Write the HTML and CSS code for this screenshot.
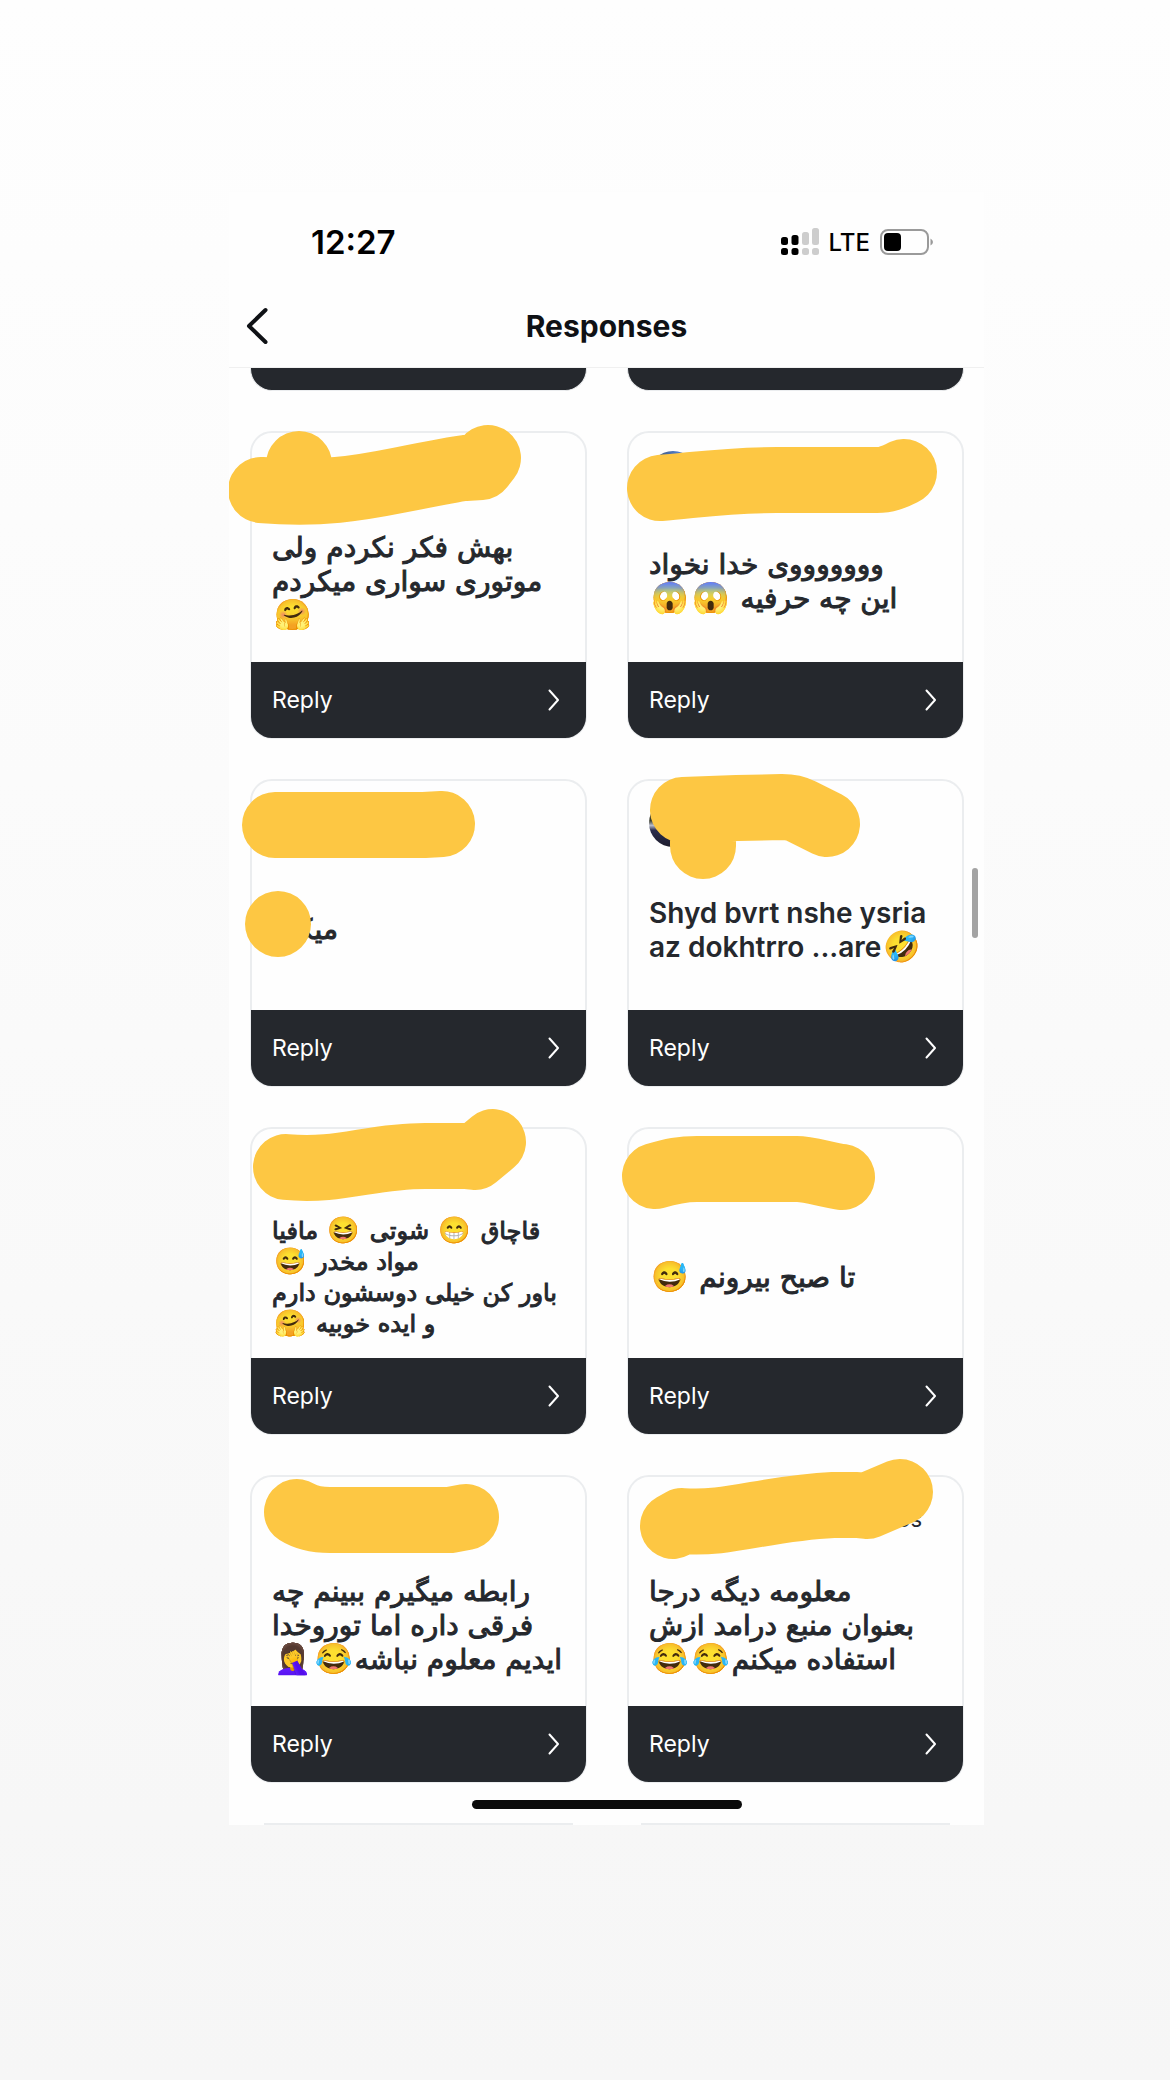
FILE: index.html
```html
<!DOCTYPE html>
<html lang="fa">

<head>
    <meta charset="UTF-8">
    <meta name="viewport" content="width=device-width, initial-scale=1.0">
    <title>Responses</title>
    <link rel="stylesheet" href="styles.css">
</head>

<body>
    <!-- Shared icons -->
    <svg class="icon-defs" aria-hidden="true">
        <symbol id="chevron" viewBox="0 0 12 22">
            <path d="M1.5 1.5 L10 11 L1.5 20.5" fill="none" stroke="currentColor" stroke-width="2" stroke-linecap="round" stroke-linejoin="round" />
        </symbol>
    </svg>

    <main class="phone">
        <div class="status-bar">
            <span class="time">12:27</span>
            <div class="status-icons">
                <svg class="signal" viewBox="0 0 38 28" aria-hidden="true">
                    <rect x="0" y="9" width="7" height="8" rx="2.5" />
                    <rect x="10.5" y="7" width="7" height="10" rx="2.5" />
                    <rect class="off" x="21" y="4" width="7" height="13" rx="2.5" />
                    <rect class="off" x="31" y="0" width="7" height="17" rx="2.5" />
                    <rect x="0" y="20" width="7" height="7" rx="2.5" />
                    <rect x="10.5" y="20" width="7" height="7" rx="2.5" />
                    <rect class="off" x="21" y="20" width="7" height="7" rx="2.5" />
                    <rect class="off" x="31" y="20" width="7" height="7" rx="2.5" />
                </svg>
                <span class="network">LTE</span>
                <svg class="battery" viewBox="0 0 54 26" aria-hidden="true">
                    <rect x="1" y="1" width="47" height="24" rx="7" fill="none" stroke="#9a9a9a" stroke-width="2" />
                    <rect x="4" y="4" width="17" height="18" rx="4" />
                    <path d="M50.5 9.5 Q53 11 53 13 Q53 15 50.5 16.5 Z" fill="#9a9a9a" />
                </svg>
            </div>
        </div>

        <header class="nav-bar">
            <button class="back" type="button" aria-label="Back">
                <svg viewBox="0 0 24 38" aria-hidden="true">
                    <path d="M20.5 3 L4 19 L20.5 35" fill="none" stroke="currentColor" stroke-width="4" stroke-linecap="round" stroke-linejoin="round" />
                </svg>
            </button>
            <h1>Responses</h1>
        </header>

        <section class="responses">
            <div class="card-end"></div>
            <div class="card-end"></div>

            <article class="card">
                <div class="card-head"></div>
                <div class="message">
                    <p dir="rtl">بهش فکر نکردم ولی<br>موتوری سواری میکردم<br><span class="emoji">🤗</span></p>
                </div>
                <button class="reply" type="button">Reply <svg><use href="#chevron" /></svg></button>
                <svg class="marker" aria-hidden="true">
                    <path d="M11 59 C70 64 110 57 150 49 S205 38 215 37 L231 36 L238 27 M49 33 V60" />
                </svg>
            </article>

            <article class="card">
                <div class="card-head"><span class="avatar avatar-blue"></span></div>
                <div class="message">
                    <p dir="rtl">وووووووی خدا نخواد<br>این چه حرفیه <span class="emoji">😱</span><span class="emoji">😱</span></p>
                </div>
                <button class="reply" type="button">Reply <svg><use href="#chevron" /></svg></button>
                <svg class="marker" aria-hidden="true">
                    <path d="M33 57 C70 54 100 49 150 49 H250 C262 49 268 45 277 41" />
                </svg>
            </article>

            <article class="card">
                <div class="card-head"></div>
                <div class="message">
                    <p dir="rtl">میکنم</p>
                </div>
                <button class="reply" type="button">Reply <svg><use href="#chevron" /></svg></button>
                <svg class="marker" aria-hidden="true">
                    <path d="M25 46 H174 L192 45 M28 145 h0.01" />
                </svg>
            </article>

            <article class="card">
                <div class="card-head"><span class="avatar avatar-dark"></span></div>
                <div class="message message-latin">
                    <p>Shyd bvrt nshe ysria<br>az dokhtrro ...are<span class="emoji">🤣</span></p>
                </div>
                <button class="reply" type="button">Reply <svg><use href="#chevron" /></svg></button>
                <svg class="marker" aria-hidden="true">
                    <path d="M56 31 L110 29 L155 28 Q166 28 174 32 L200 45 M76 40 V67" />
                </svg>
            </article>

            <article class="card">
                <div class="card-head"></div>
                <div class="message message-small">
                    <p dir="rtl">قاچاق <span class="emoji">😁</span> شوتی <span class="emoji">😆</span> مافیا<br>مواد مخدر <span class="emoji">😅</span><br>باور کن خیلی دوسشون دارم<br>و ایده خوبیه <span class="emoji">🤗</span></p>
                </div>
                <button class="reply" type="button">Reply <svg><use href="#chevron" /></svg></button>
                <svg class="marker" aria-hidden="true">
                    <path d="M36 40 C90 45 120 29 175 29 H215 L225 30 L243 15" />
                </svg>
            </article>

            <article class="card">
                <div class="card-head"></div>
                <div class="message">
                    <p dir="rtl">تا صبح بیرونم <span class="emoji">😅</span></p>
                </div>
                <button class="reply" type="button">Reply <svg><use href="#chevron" /></svg></button>
                <svg class="marker" aria-hidden="true">
                    <path d="M28 49 C45 44 55 42 70 42 H170 C182 42 200 48 215 50" />
                </svg>
            </article>

            <article class="card">
                <div class="card-head"></div>
                <div class="message">
                    <p dir="rtl">رابطه میگیرم ببینم چه<br>فرقی داره اما توروخدا<br>ایدیم معلوم نباشه<span class="emoji">😂</span><span class="emoji">🤦‍♀️</span></p>
                </div>
                <button class="reply" type="button">Reply <svg><use href="#chevron" /></svg></button>
                <svg class="marker" aria-hidden="true">
                    <path d="M47 37 C55 42 65 45 80 45 H200 L216 42" />
                </svg>
            </article>

            <article class="card">
                <div class="card-head"><span class="username">os</span></div>
                <div class="message">
                    <p dir="rtl">معلومه دیگه درجا<br>بعنوان منبع درامد ازش<br>استفاده میکنم<span class="emoji">😂</span><span class="emoji">😂</span></p>
                </div>
                <button class="reply" type="button">Reply <svg><use href="#chevron" /></svg></button>
                <svg class="marker" aria-hidden="true">
                    <path d="M46 51 L55 46 C100 50 140 33 206 30 H230 L240 31 L273 17" />
                </svg>
            </article>

            <div class="card-start"></div>
            <div class="card-start"></div>
        </section>

        <div class="scrollbar"></div>
        <div class="home-indicator"></div>
    </main>
</body>

</html>
```
FILE: styles.css
```css
/* Reset default margin and padding */
* {
    margin: 0;
    padding: 0;
    box-sizing: border-box;
}

/* Page background, phone column sits a little left of centre */
body {
    font-family: Inter, "DejaVu Sans", sans-serif;
    background: linear-gradient(#fefefe, #f6f6f6);
    min-height: 100vh;
    display: grid;
    grid-template-columns: 229fr 755fr 186fr;
    align-items: start;
    padding: 192px 0;
    color: #25282d;
}

.icon-defs {
    position: absolute;
    width: 0;
    height: 0;
}

.phone {
    grid-column: 2;
    position: relative;
    background: #fefefe;
    overflow: hidden;
}

/* Status bar */
.status-bar {
    display: flex;
    justify-content: space-between;
    align-items: center;
    height: 100px;
    padding: 0 50px 0 82px;
    color: #000;
}

.time {
    font-size: 33px;
    font-weight: 600;
}

.status-icons {
    display: flex;
    align-items: center;
    gap: 10px;
}

.signal {
    width: 38px;
    height: 28px;
}

.signal .off {
    fill: #cdcdcd;
}

.network {
    font-size: 24px;
    font-weight: 500;
}

.battery {
    width: 54px;
    height: 26px;
}

/* Navigation bar */
.nav-bar {
    display: grid;
    grid-template-columns: 60px 1fr 60px;
    align-items: center;
    height: 76px;
    padding-bottom: 8px;
    border-bottom: 1px solid #f0f0f0;
    color: #0f1115;
}

.back {
    display: flex;
    padding-left: 16px;
    border: none;
    background: none;
    color: inherit;
    cursor: pointer;
}

.back svg {
    width: 24px;
    height: 38px;
}

h1 {
    font-size: 30px;
    font-weight: 700;
    text-align: center;
}

/* Cards */
.responses {
    display: grid;
    grid-template-columns: repeat(2, minmax(0, 1fr));
    gap: 40px;
    padding: 0 20px 0 21px;
}

.card {
    position: relative;
    display: flex;
    flex-direction: column;
    height: 308px;
    border: 2px solid #ebedef;
    border-radius: 22px;
}

.card-head {
    display: flex;
    flex: none;
    height: 69px;
    padding: 18px 20px 0;
}

.avatar {
    width: 48px;
    height: 48px;
    border-radius: 50%;
}

.avatar-blue {
    background: linear-gradient(90deg, #3c4a5c, #4f7ccb 60%, #33425c);
}

.avatar-dark {
    background: linear-gradient(#3a3d30 45%, #b9bccb 55%, #2b2d4d 65%, #1d1c2c);
}

.username {
    margin: 10px 20px 0 auto;
    font-size: 22px;
    line-height: 28px;
}

.message {
    flex: 1;
    display: flex;
    align-items: center;
    padding: 0 20px;
    font-family: "DejaVu Sans", sans-serif;
    font-size: 28px;
    line-height: 34px;
    text-align: left;
    white-space: nowrap;
    -webkit-text-stroke: 1px #25282d;
}

.message-small {
    font-size: 24px;
    line-height: 31px;
}

.message-latin {
    font-family: Inter, sans-serif;
    font-weight: 600;
    -webkit-text-stroke: 0;
}

.emoji {
    display: inline-block;
    margin: 0 2px;
    font-family: "Noto Color Emoji", sans-serif;
    font-size: 30px;
    font-weight: 400;
    line-height: 0;
}

.message-small .emoji {
    font-size: 26px;
}

.reply {
    display: flex;
    justify-content: space-between;
    align-items: center;
    height: 76px;
    margin: 0 -1px -1px;
    padding: 0 26px 0 21px;
    border: none;
    border-radius: 0 0 21px 21px;
    background: #25282d;
    color: #fff;
    font-family: inherit;
    font-size: 23px;
    cursor: pointer;
}

.reply svg {
    width: 12px;
    height: 22px;
}

/* Marker strokes drawn over the names */
.marker {
    position: absolute;
    top: -2px;
    left: -2px;
    width: 100%;
    height: 100%;
    overflow: visible;
    pointer-events: none;
    fill: none;
    stroke: #fdc743;
    stroke-width: 66px;
    stroke-linecap: round;
    stroke-linejoin: round;
}

/* Rows cut off by the top and bottom of the list */
.card-end {
    height: 23px;
    border: 1px solid #ebedef;
    border-top: none;
    border-radius: 0 0 22px 22px;
    background: #25282d;
}

.card-start {
    height: 2px;
    margin: 0 14px;
    background: #ebedef;
}

.scrollbar {
    position: absolute;
    top: 676px;
    right: 6px;
    width: 6px;
    height: 70px;
    border-radius: 3px;
    background: #a3a3a3;
}

.home-indicator {
    position: absolute;
    bottom: 16px;
    left: 50%;
    width: 270px;
    height: 9px;
    margin-left: -135px;
    border-radius: 5px;
    background: #0b0b0b;
}
```
